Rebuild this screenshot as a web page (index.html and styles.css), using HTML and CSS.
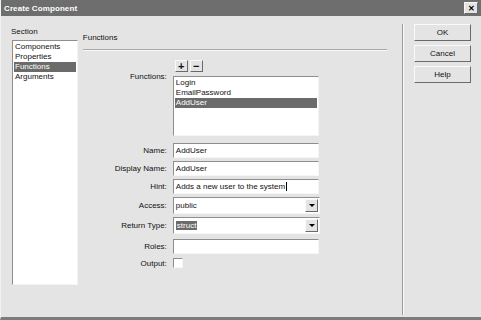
FILE: index.html
```html
<!DOCTYPE html>
<html lang="en">
  <head>
    <meta charset="UTF-8" />
    <title>Create Component</title>
    <link rel="stylesheet" href="styles.css">
  </head>
  <body>
    <div class="window">
      <div class="titlebar">
        <span class="title">Create Component</span>
        <span class="close">&#x2715;</span>
      </div>

      <div class="content">
        <div class="section">
          <div class="section-label">Section</div>
          <ul class="section-list">
            <li>Components</li>
            <li>Properties</li>
            <li class="selected">Functions</li>
            <li>Arguments</li>
          </ul>
        </div>

        <div class="main">
          <div class="main-title">Functions</div>
          <div class="rule"></div>

          <div class="form">
            <div class="label"></div>
            <div class="tools">
              <span class="tool">+</span>
              <span class="tool">&minus;</span>
            </div>

            <div class="label label-top">Functions:</div>
            <ul class="fn-list">
              <li>Login</li>
              <li>EmailPassword</li>
              <li class="selected">AddUser</li>
            </ul>

            <div class="label">Name:</div>
            <div class="input">AddUser</div>

            <div class="label">Display Name:</div>
            <div class="input">AddUser</div>

            <div class="label">Hint:</div>
            <div class="input"><span class="caret">Adds a new user to the system</span></div>

            <div class="label">Access:</div>
            <div class="select">
              <span class="value">public</span>
              <span class="arrow"></span>
            </div>

            <div class="label spaced">Return Type:</div>
            <div class="select spaced">
              <span class="value"><span class="hl">struct</span></span>
              <span class="arrow"></span>
            </div>

            <div class="label">Roles:</div>
            <div class="input">
            </div>

            <div class="label">Output:</div>
            <div class="check-cell"><span class="checkbox"></span></div>
          </div>
        </div>

        <div class="vsep"></div>

        <div class="buttons">
          <div class="button">OK</div>
          <div class="button">Cancel</div>
          <div class="button">Help</div>
        </div>
      </div>
    </div>
  </body>
</html>
```

FILE: styles.css
```css
* {
  margin: 0;
  padding: 0;
  box-sizing: border-box;
}

body {
  width: 481px;
  height: 320px;
  overflow: hidden;
  background: #e4e4e4;
  font-family: "Liberation Sans", Arial, sans-serif;
  font-size: 8px;
  color: #111;
}

ul {
  list-style: none;
}

.window {
  width: 481px;
  height: 320px;
  display: flex;
  flex-direction: column;
  background: #e4e4e4;
  border-left: 1px solid #f2f2f2;
  border-bottom: 3px solid #7c7c7c;
}

/* Title bar */
.titlebar {
  height: 16px;
  flex-shrink: 0;
  display: flex;
  align-items: center;
  justify-content: space-between;
  background: #6e6e6e;
  padding: 0 3px 0 3px;
}

.title {
  color: #fff;
  font-weight: bold;
  font-size: 8px;
  letter-spacing: 0.1px;
}

.close {
  width: 14px;
  height: 12px;
  display: flex;
  align-items: center;
  justify-content: center;
  background: #e4e4e4;
  border: 1px solid;
  border-color: #fafafa #6a6a6a #6a6a6a #fafafa;
  font-size: 8px;
  font-weight: bold;
  color: #000;
}

/* Body */
.content {
  flex: 1;
  display: flex;
  padding: 8px 10px 2px 10px;
}

.section {
  width: 67px;
  display: flex;
  flex-direction: column;
}

.section-label {
  height: 16px;
  line-height: 12px;
  padding-top: 2px;
}

.section-list {
  height: 245px;
  margin-left: 1px;
  background: #fff;
  border: 1px solid;
  border-color: #8e8e8e #f4f4f4 #f4f4f4 #8e8e8e;
  padding: 1px;
}

.section-list li,
.fn-list li {
  height: 10px;
  line-height: 10px;
  padding-left: 1px;
}

.selected {
  background: #6b6b6b;
  color: #fff;
}

/* Main area */
.main {
  width: 305px;
  margin-left: 5px;
  display: flex;
  flex-direction: column;
}

.main-title {
  height: 25px;
  line-height: 12px;
  padding-top: 8px;
}

.rule {
  height: 2px;
  border-top: 1px solid #a9a9a9;
  border-bottom: 1px solid #f8f8f8;
  margin-bottom: 9px;
}

.form {
  display: grid;
  grid-template-columns: 84px 148px;
  column-gap: 6px;
  row-gap: 3px;
  align-items: center;
}

.label {
  text-align: right;
  white-space: nowrap;
}

.label-top {
  align-self: start;
  margin-top: -4px;
}

.spaced {
  margin-bottom: 2px;
}

.tools {
  display: flex;
  gap: 2px;
  padding-left: 2px;
  margin-bottom: 1px;
}

.tool {
  width: 13px;
  height: 12px;
  display: flex;
  align-items: center;
  justify-content: center;
  background: #e4e4e4;
  border: 1px solid;
  border-color: #fafafa #6a6a6a #6a6a6a #fafafa;
  font-weight: bold;
  font-size: 11px;
  line-height: 1;
}

.fn-list {
  width: 146px;
  height: 60px;
  background: #fff;
  border: 1px solid;
  border-color: #8e8e8e #f4f4f4 #f4f4f4 #8e8e8e;
  padding: 1px;
  margin-bottom: 4px;
}

.input {
  width: 146px;
  height: 15px;
  line-height: 13px;
  background: #fff;
  border: 1px solid;
  border-color: #8e8e8e #f6f6f6 #f6f6f6 #8e8e8e;
  padding-left: 2px;
  white-space: nowrap;
}

.caret {
  border-right: 1px solid #000;
  padding-right: 1px;
}

.select {
  width: 147px;
  height: 17px;
  display: flex;
  align-items: center;
  background: #fff;
  border: 1px solid;
  border-color: #8e8e8e #f6f6f6 #f6f6f6 #8e8e8e;
  padding: 1px;
}

.select .value {
  flex: 1;
  padding-left: 1px;
}

.hl {
  background: #6b6b6b;
  color: #fff;
  padding: 0 1px;
}

.arrow {
  width: 13px;
  height: 13px;
  position: relative;
  background: #e4e4e4;
  border: 1px solid;
  border-color: #fafafa #6a6a6a #6a6a6a #fafafa;
}

.arrow::after {
  content: "";
  position: absolute;
  left: 3px;
  top: 4px;
  border-left: 3px solid transparent;
  border-right: 3px solid transparent;
  border-top: 3px solid #000;
}

.check-cell {
  height: 12px;
  display: flex;
  align-items: center;
}

.checkbox {
  width: 10px;
  height: 10px;
  background: #fff;
  border: 1px solid;
  border-color: #8e8e8e #f6f6f6 #f6f6f6 #8e8e8e;
}

/* Separator and buttons */
.vsep {
  width: 2px;
  margin: 0 10px 0 15px;
  border-left: 1px solid #9a9a9a;
  border-right: 1px solid #fafafa;
}

.buttons {
  display: flex;
  flex-direction: column;
  gap: 4px;
}

.button {
  width: 57px;
  height: 17px;
  display: flex;
  align-items: center;
  justify-content: center;
  background: #e4e4e4;
  border: 1px solid;
  border-color: #fafafa #6a6a6a #6a6a6a #fafafa;
}
```
